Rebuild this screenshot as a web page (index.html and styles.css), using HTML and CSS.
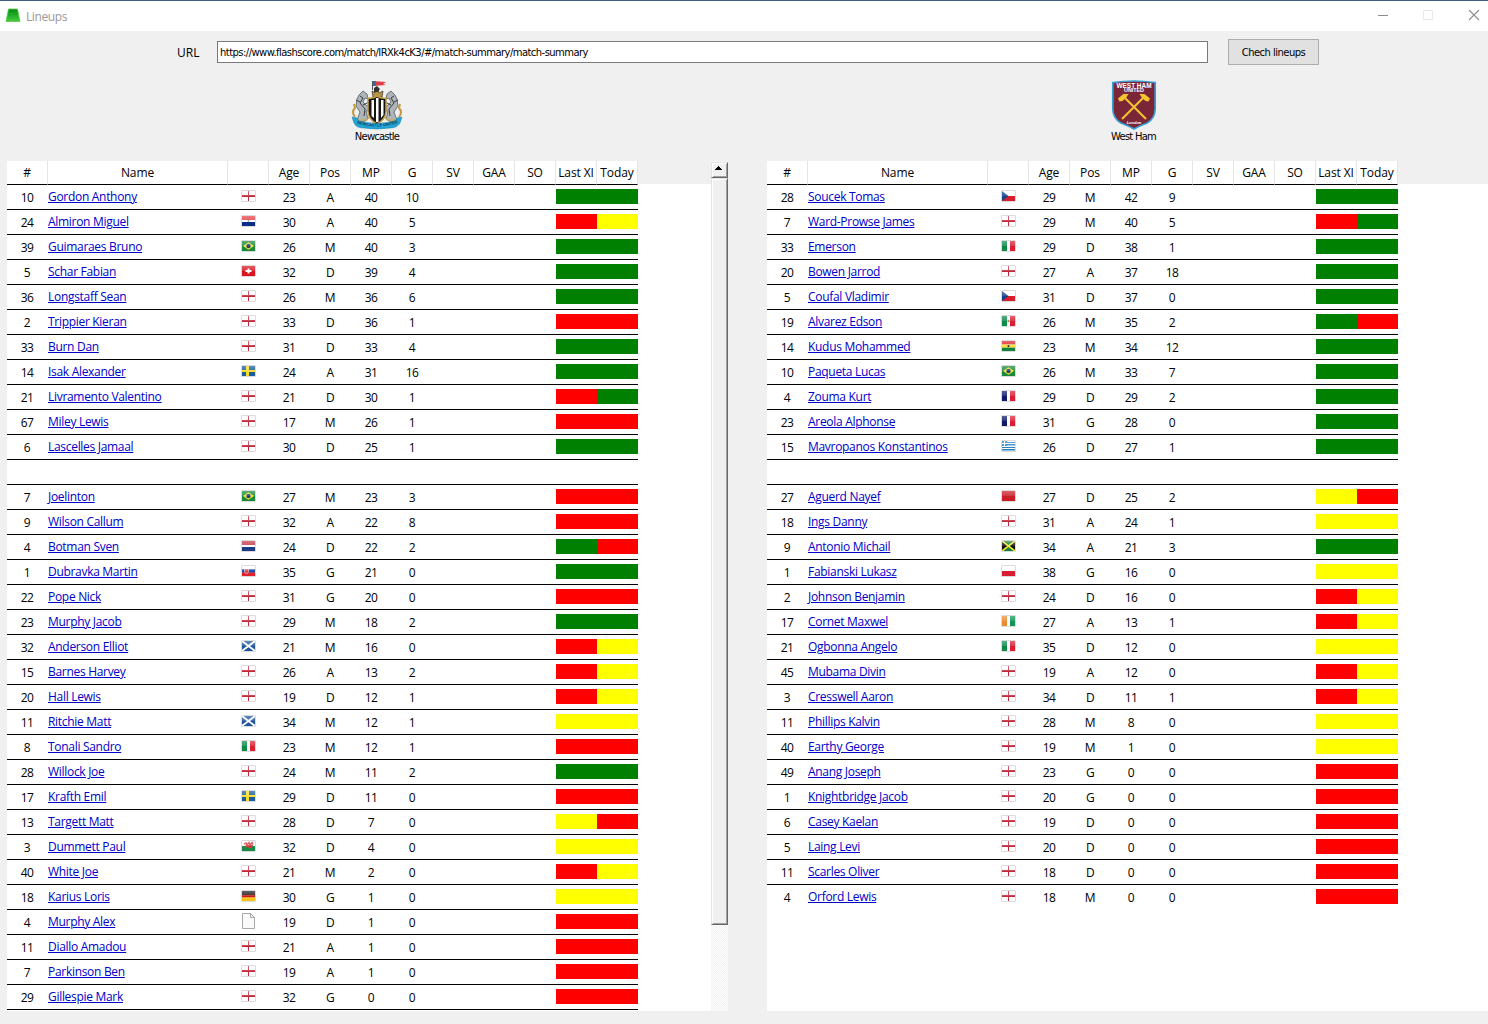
FILE: index.html
```html
<!DOCTYPE html>
<html lang="en">
<head>
<meta charset="utf-8">
<title>Lineups</title>
<link rel="stylesheet" href="styles.css">
</head>
<body>
<svg class="defs" aria-hidden="true">
  <defs>
    <linearGradient id="gloss" x1="0" y1="0" x2="0" y2="1"><stop offset="0" stop-color="#fff" stop-opacity=".3"/><stop offset=".5" stop-color="#fff" stop-opacity=".12"/><stop offset=".52" stop-color="#fff" stop-opacity="0"/></linearGradient>
    <linearGradient id="app" x1="0" y1="0" x2="0" y2="1"><stop offset="0" stop-color="#0c8a12"/><stop offset=".5" stop-color="#1fae26"/><stop offset="1" stop-color="#4cc83e"/></linearGradient>
  </defs>
  <symbol id="eng" viewBox="0 0 13 10"><path fill="#fff" d="M0 0h13v10H0z"/><path fill="#c22a3c" d="M0 4h13v2H0zM6 0h1v10H6z"/></symbol>
  <symbol id="par" viewBox="0 0 13 10"><path fill="#e8414a" d="M0 0h13v4H0z"/><path fill="#fff" d="M0 4h13v2H0z"/><path fill="#0b2f86" d="M0 6h13v4H0z"/><circle cx="6.5" cy="4.8" r="1" fill="#8c9a90"/></symbol>
  <symbol id="ned" viewBox="0 0 13 10"><path fill="#c93745" d="M0 0h13v4H0z"/><path fill="#fff" d="M0 4h13v2H0z"/><path fill="#1d3a84" d="M0 6h13v4H0z"/></symbol>
  <symbol id="bra" viewBox="0 0 13 10"><path fill="#188a3a" d="M0 0h13v10H0z"/><path fill="#f0e03a" d="M6.5 1.2L12 5 6.5 8.8 1 5z"/><circle cx="6.5" cy="5" r="2.2" fill="#23406f"/></symbol>
  <symbol id="sui" viewBox="0 0 13 10"><path fill="#d9141e" d="M0 0h13v10H0z"/><path fill="#fff" d="M5.5 2.500h2V4h2v2h-2v1.500h-2V6h-2V4h2z"/></symbol>
  <symbol id="swe" viewBox="0 0 13 10"><path fill="#1c5c9c" d="M0 0h13v10H0z"/><path fill="#f8dc2c" d="M0 4h13v2H0zM4 0h3v10H4z"/></symbol>
  <symbol id="svk" viewBox="0 0 13 10"><path fill="#fff" d="M0 0h13v3.300H0z"/><path fill="#1642a0" d="M0 3.300h13v3.400H0z"/><path fill="#e0202a" d="M0 6.600h13V10H0z"/><path fill="#e0404a" stroke="#fff" stroke-width=".5" d="M2.500 3h4v3L4.500 8 2.500 6z"/></symbol>
  <symbol id="sco" viewBox="0 0 13 10"><path fill="#1c559c" d="M0 0h13v10H0z"/><path stroke="#fff" stroke-width="1.800" d="M0 0l13 10M13 0L0 10"/></symbol>
  <symbol id="ita" viewBox="0 0 13 10"><path fill="#0d8a4a" d="M0 0h5v10H0z"/><path fill="#fff" d="M5 0h3v10H5z"/><path fill="#d91f30" d="M8 0h5v10H8z"/></symbol>
  <symbol id="mex" viewBox="0 0 13 10"><path fill="#0d8a4a" d="M0 0h5v10H0z"/><path fill="#fff" d="M5 0h3v10H5z"/><path fill="#d91f30" d="M8 0h5v10H8z"/><circle cx="6.500" cy="5" r="1.200" fill="#a08a50"/></symbol>
  <symbol id="fra" viewBox="0 0 13 10"><path fill="#101a68" d="M0 0h5v10H0z"/><path fill="#fff" d="M5 0h3v10H5z"/><path fill="#dc1c34" d="M8 0h5v10H8z"/></symbol>
  <symbol id="civ" viewBox="0 0 13 10"><path fill="#ee8a30" d="M0 0h5v10H0z"/><path fill="#fff" d="M5 0h3v10H5z"/><path fill="#129458" d="M8 0h5v10H8z"/></symbol>
  <symbol id="wal" viewBox="0 0 13 10"><path fill="#fff" d="M0 0h13v5H0z"/><path fill="#178a48" d="M0 5h13v5H0z"/><path fill="none" stroke="#d83a40" stroke-width="1.500" d="M2 3l2-1 1 2 2-2.500L8 4l2-2.500 1 2M3 7l1.500-2.500L8 5l1 2M6 7V5l5-.5"/></symbol>
  <symbol id="ger" viewBox="0 0 13 10"><path fill="#1c1c1c" d="M0 0h13v4H0z"/><path fill="#ce1a18" d="M0 4h13v2.500H0z"/><path fill="#fbc414" d="M0 6.500h13V10H0z"/></symbol>
  <symbol id="cze" viewBox="0 0 13 10"><path fill="#fff" d="M0 0h13v5H0z"/><path fill="#d81e28" d="M0 5h13v5H0z"/><path fill="#17438c" d="M0 0l6.500 5L0 10z"/></symbol>
  <symbol id="gha" viewBox="0 0 13 10"><path fill="#dc2430" d="M0 0h13v3.500H0z"/><path fill="#fbe03a" d="M0 3.500h13v3.200H0z"/><path fill="#128240" d="M0 6.700h13V10H0z"/><circle cx="6.500" cy="5" r="1.100" fill="#222"/></symbol>
  <symbol id="gre" viewBox="0 0 13 10"><path fill="#fff" d="M0 0h13v10H0z"/><path fill="#2b82c0" d="M5 1h8v1H5zM5 3h8v1.500H5zM0 6h13v1H0zM0 8h13v1.500H0zM0 0h5v5H0z"/><path fill="#fff" d="M2 0h1v5H2zM0 2h5v1H0z"/></symbol>
  <symbol id="mar" viewBox="0 0 13 10"><path fill="#cb1c28" d="M0 0h13v10H0z"/><circle cx="6.500" cy="5" r="1.400" fill="none" stroke="#98442c" stroke-width=".7"/></symbol>
  <symbol id="jam" viewBox="0 0 13 10"><path fill="#16803a" d="M0 0h13v10H0z"/><path fill="#111" d="M0 0l6.500 5L0 10zM13 0L6.500 5 13 10z"/><path stroke="#f8e838" stroke-width="1.600" d="M0 0l13 10M13 0L0 10"/></symbol>
  <symbol id="pol" viewBox="0 0 13 10"><path fill="#fff" d="M0 0h13v5H0z"/><path fill="#d81e32" d="M0 5h13v5H0z"/></symbol>
</svg>

<header class="titlebar">
  <svg class="appicon" viewBox="0 0 16 15"><path fill="url(#app)" stroke="#57c84a" stroke-width=".8" d="M3.500 1h9L15 13.500H1z"/></svg>
  <span class="title">Lineups</span>
  <svg class="controls" viewBox="0 0 112 30"><path stroke="#8c8c8c" d="M2 14.500h10"/><path fill="none" stroke="#e8e8e8" d="M47.500 9.500h9v9h-9z"/><path fill="none" stroke="#8c8c8c" stroke-width="1.100" d="M93 9l10 10m0-10l-10 10"/></svg>
</header>

<section class="urlbar">
  <label class="urllabel" for="url">URL</label>
  <input class="url" id="url" value="https://www.flashscore.com/match/IRXk4cK3/#/match-summary/match-summary">
  <button class="check">Chech lineups</button>
</section>

<section class="teams">
  <div class="team home">
    <svg class="crest" viewBox="0 0 52 50">
      <path fill="#e33b43" d="M21 1l14 1-3 2 3 1-13 1z"/><path fill="#346fa8" d="M21 1h4v5h-4z"/><path stroke="#555" d="M21.500 1v9"/>
      <path fill="#b89443" stroke="#332b20" stroke-width=".7" d="M22 17l-1-6 3 2 2-4 2 4 4-2-1 6z"/><path fill="#333" d="M23 8l3-2 3 3-2 3h-4z"/>
      <g id="horse"><path fill="#aeb4b7" stroke="#545b60" stroke-width=".8" d="M8 15l4-4 4 3 1 5-3-1-2 4 4 4 5 1v3l-6 1 2 8-5 3-6-2 3-8-4-6 1-7z"/><path fill="none" stroke="#363c42" d="M9 16l3 2-3 5 5 6-1 7M5 20l4 2M12 25l6-3"/><path fill="none" stroke="#c39a42" stroke-width="2" d="M4 37q-4-5 0-9l-1-4"/><path fill="none" stroke="#d2ab48" stroke-width="1.200" d="M7 40h9l2-3"/></g>
      <use href="#horse" transform="translate(52 0) scale(-1 1)"/>
      <path fill="#151515" stroke="#c39b4a" stroke-width="1.500" d="M17 18q4 1 9-2 5 3 9 2v13q0 8-9 13-9-5-9-13z"/><path fill="#fff" d="M20.500 20h2.500v18l-2.500-2zM25 18h2.500v24H25zM30 20h2.500v15L30 38z"/>
      <path fill="#23a4d4" stroke="#137fac" stroke-width=".5" d="M1 37l5 1q1 4 7 4 13 3 26 0 6 0 7-4l5-1-2 6q-3 5-10 5-13 2-26 0-8 0-10-5z"/>
      <path id="motto" fill="none" d="M6 43.500q20 6 41-.5"/><text class="motto"><textPath href="#motto">NEWCASTLE UNITED</textPath></text>
    </svg>
    <span class="teamname">Newcastle</span>
  </div>
  <div class="team away">
    <svg class="crest" viewBox="0 0 52 50">
      <path fill="#7b2638" stroke="#36a0d4" stroke-width="1.700" d="M4.800 2.500q11-1.500 21.200-1.500t21.200 1.500V29q0 9-8 14-8 3-13.200 6-5-3-13.200-6-8-5-8-14z"/>
      <text class="wh" x="26" y="8" textLength="35" lengthAdjust="spacingAndGlyphs">WEST HAM</text><text class="whu" x="26" y="12" textLength="20" lengthAdjust="spacingAndGlyphs">UNITED</text>
      <path fill="none" stroke="#f3c52e" stroke-width="2" d="M16 17L38 39M36 17L14 39"/><path fill="#f3c52e" d="M10 18.500l5.500-4.500h5l-2.500 4-3.500 3-3 .5zM42 18.500l-5.500-4.500h-5l2.500 4 3.500 3 3 .5z"/>
      <text class="lon" x="26" y="43.500">London</text>
    </svg>
    <span class="teamname">West Ham</span>
  </div>
</section>

<main class="panels">
  <section class="panel left"><div class="view"><table class="grid" id="home"></table></div>
    <div class="scroll"><button class="up" aria-label="Scroll up"><svg viewBox="0 0 7 4"><path d="M3 0h1v1h1v1h1v1h1v1H0V3h1V2h1V1h1z"/></svg></button><div class="thumb"></div></div>
  </section>
  <section class="panel right"><div class="view"><table class="grid" id="away"></table></div></section>
</main>
<script src="lineups.js"></script>
</body>
</html>
```
FILE: styles.css
```css
* { box-sizing: border-box; }
body { margin: 0; width: 1488px; height: 1024px; overflow: hidden; background: #f0f0f0; color: #000; font: 12px "Open Sans", "Noto Sans", sans-serif; display: flex; flex-direction: column; }
.defs { position: absolute; width: 0; height: 0; }
.titlebar { height: 31px; flex: none; border-top: 1px solid #3d6384; background: #fff; display: flex; align-items: center; padding-left: 5px; }
.appicon { width: 16px; height: 15px; margin-top: -2px; }
.title { margin-left: 5px; color: #999; letter-spacing: -.4px; }
.controls { width: 112px; height: 30px; margin-left: auto; }
.urlbar { height: 43px; flex: none; display: flex; align-items: flex-start; padding: 8px 0 0 177px; }
.urllabel { width: 40px; line-height: 28px; }
.url { width: 991px; height: 22px; margin-top: 2px; padding: 0 2px; border: 1px solid #7a7a7a; background: #fff; font: 10px "DejaVu Sans", sans-serif; letter-spacing: -.55px; color: #000; }
.check { width: 91px; height: 26px; margin-left: 20px; padding: 1px 0 0; border: 1px solid #adadad; background: #e1e1e1; font: 10px "DejaVu Sans", sans-serif; letter-spacing: -.53px; color: #000; }
.teams { height: 87px; flex: none; display: flex; padding-top: 6px; }
.team { flex: none; display: flex; flex-direction: column; align-items: center; }
.home { width: 754px; }
.away { width: 759px; }
.crest { width: 52px; height: 50px; }
.teamname { margin-top: 1px; font: 10px/12px "DejaVu Sans", sans-serif; letter-spacing: -.75px; }
.home .teamname { letter-spacing: -.8px; }
.motto { font: bold 4px "Liberation Sans", sans-serif; fill: #143c5c; }
.wh, .whu, .lon { font: bold 6.5px "Liberation Sans", sans-serif; fill: #fff; text-anchor: middle; }
.whu { font-size: 4.500px; }
.lon { font-size: 4px; font-style: italic; }
.panels { height: 850px; flex: none; display: flex; gap: 39px; padding-left: 7px; }
.panel { display: flex; background: linear-gradient(#f0f0f0 23px, #fff 23px); }
.left { width: 721px; }
.right { width: 721px; }
.view { flex: 1; overflow: hidden; }
.grid { width: 631px; border-collapse: separate; border-spacing: 0; table-layout: fixed; }
.grid th { height: 24px; padding: 0; background: #fff; border-right: 1px solid #e5e5e5; border-bottom: 1px solid #000; font-weight: 400; line-height: 20px; letter-spacing: -.1px; white-space: nowrap; }
.grid td { height: 25px; padding: 2px 1px 0 0; border-bottom: 1px solid #000; text-align: center; line-height: 20px; letter-spacing: -.5px; }
.grid td.name { padding: 0; text-align: left; letter-spacing: -.3px; white-space: nowrap; }
#away tbody tr:last-child td { border-bottom-color: transparent; }
.name a { color: #0000c8; text-decoration: underline; text-underline-offset: 1px; }
.grid td.flagcell { padding: 0 0 2px; }
.col-name { width: 180px; }
.col { width: 41px; }
.grid td.state { padding: 4px 0 5px; }
.bar { height: 15px; }
.green { background: #008000; }
.red { background: #f00; }
.yellow { background: #ff0; }
.flag { display: block; width: 15px; height: 12px; margin: 0 auto; overflow: visible; }
.edge { fill: #c8c8c8; opacity: .65; }
.shine { fill: url(#gloss); }
.nofile { fill: #fafafa; stroke: #a8a8a8; }
.scroll { width: 17px; padding-top: 1px; background: repeating-conic-gradient(#f0f0f0 0 25%, #fff 0 50%) 0 0 / 2px 2px; }
.up, .thumb { display: block; width: 17px; background: #f0f0f0; border: 1px solid; border-color: #e3e3e3 #696969 #696969 #e3e3e3; box-shadow: inset 1px 1px #fff, inset -1px -1px #a0a0a0; }
.up { height: 16px; padding: 0 2px 4px 0; line-height: 0; }
.up svg { width: 7px; height: 4px; shape-rendering: crispEdges; }
.thumb { height: 747px; }
```
FILE: lineups.js
```js
const columns = ["#", "Name", "", "Age", "Pos", "MP", "G", "SV", "GAA", "SO", "Last XI", "Today"];

// number|name|flag|age|position|matches|goals|last XI and today
const home = `10|Gordon Anthony|eng|23|A|40|10|gg
24|Almiron Miguel|par|30|A|40|5|ry
39|Guimaraes Bruno|bra|26|M|40|3|gg
5|Schar Fabian|sui|32|D|39|4|gg
36|Longstaff Sean|eng|26|M|36|6|gg
2|Trippier Kieran|eng|33|D|36|1|rr
33|Burn Dan|eng|31|D|33|4|gg
14|Isak Alexander|swe|24|A|31|16|gg
21|Livramento Valentino|eng|21|D|30|1|rg
67|Miley Lewis|eng|17|M|26|1|rr
6|Lascelles Jamaal|eng|30|D|25|1|gg

7|Joelinton|bra|27|M|23|3|rr
9|Wilson Callum|eng|32|A|22|8|rr
4|Botman Sven|ned|24|D|22|2|gr
1|Dubravka Martin|svk|35|G|21|0|gg
22|Pope Nick|eng|31|G|20|0|rr
23|Murphy Jacob|eng|29|M|18|2|gg
32|Anderson Elliot|sco|21|M|16|0|ry
15|Barnes Harvey|eng|26|A|13|2|ry
20|Hall Lewis|eng|19|D|12|1|ry
11|Ritchie Matt|sco|34|M|12|1|yy
8|Tonali Sandro|ita|23|M|12|1|rr
28|Willock Joe|eng|24|M|11|2|gg
17|Krafth Emil|swe|29|D|11|0|rr
13|Targett Matt|eng|28|D|7|0|yr
3|Dummett Paul|wal|32|D|4|0|yy
40|White Joe|eng|21|M|2|0|ry
18|Karius Loris|ger|30|G|1|0|yy
4|Murphy Alex|none|19|D|1|0|rr
11|Diallo Amadou|eng|21|A|1|0|rr
7|Parkinson Ben|eng|19|A|1|0|rr
29|Gillespie Mark|eng|32|G|0|0|rr`;

const away = `28|Soucek Tomas|cze|29|M|42|9|gg
7|Ward-Prowse James|eng|29|M|40|5|rg
33|Emerson|ita|29|D|38|1|gg
20|Bowen Jarrod|eng|27|A|37|18|gg
5|Coufal Vladimir|cze|31|D|37|0|gg
19|Alvarez Edson|mex|26|M|35|2|gr
14|Kudus Mohammed|gha|23|M|34|12|gg
10|Paqueta Lucas|bra|26|M|33|7|gg
4|Zouma Kurt|fra|29|D|29|2|gg
23|Areola Alphonse|fra|31|G|28|0|gg
15|Mavropanos Konstantinos|gre|26|D|27|1|gg

27|Aguerd Nayef|mar|27|D|25|2|yr
18|Ings Danny|eng|31|A|24|1|yy
9|Antonio Michail|jam|34|A|21|3|gg
1|Fabianski Lukasz|pol|38|G|16|0|yy
2|Johnson Benjamin|eng|24|D|16|0|ry
17|Cornet Maxwel|civ|27|A|13|1|ry
21|Ogbonna Angelo|ita|35|D|12|0|yy
45|Mubama Divin|eng|19|A|12|0|ry
3|Cresswell Aaron|eng|34|D|11|1|ry
11|Phillips Kalvin|eng|28|M|8|0|yy
40|Earthy George|eng|19|M|1|0|yy
49|Anang Joseph|eng|23|G|0|0|rr
1|Knightbridge Jacob|eng|20|G|0|0|rr
6|Casey Kaelan|eng|19|D|0|0|rr
5|Laing Levi|eng|20|D|0|0|rr
11|Scarles Oliver|eng|18|D|0|0|rr
4|Orford Lewis|eng|18|M|0|0|rr`;

const colours = { g: "green", r: "red", y: "yellow" };

function flag(code) {
  if (code === "none") {
    return '<svg class="flag" viewBox="0 0 15 12"><path class="nofile" d="M1.5-1.500h8l4 4v11h-12zM9.500-1.500v4h4"/></svg>';
  }
  return `<svg class="flag" viewBox="0 0 15 12"><rect class="edge" width="15" height="12" rx="1.500"/><use href="#${code}" x="1" y="1" width="13" height="10"/><path class="shine" d="M1 1h13v10H1z"/></svg>`;
}

function row(line) {
  if (!line) return '<tr><td colspan="12"></td></tr>';
  const [no, name, code, age, pos, mp, goals, state] = line.split("|");
  const bars = [...state].map(s => `<td class="state"><div class="bar ${colours[s]}"></div></td>`).join("");
  return `<tr><td>${no}</td><td class="name"><a href="#">${name}</a></td><td class="flagcell">${flag(code)}</td><td>${age}</td><td>${pos}</td><td>${mp}</td><td>${goals}</td><td></td><td></td><td></td>${bars}</tr>`;
}

function fill(id, data) {
  const cols = columns.map(c => `<col class="${c === "Name" ? "col-name" : "col"}">`).join("");
  const head = columns.map(c => `<th>${c}</th>`).join("");
  document.getElementById(id).innerHTML = `<colgroup>${cols}</colgroup><thead><tr>${head}</tr></thead><tbody>${data.split("\n").map(row).join("")}</tbody>`;
}

fill("home", home);
fill("away", away);
```
